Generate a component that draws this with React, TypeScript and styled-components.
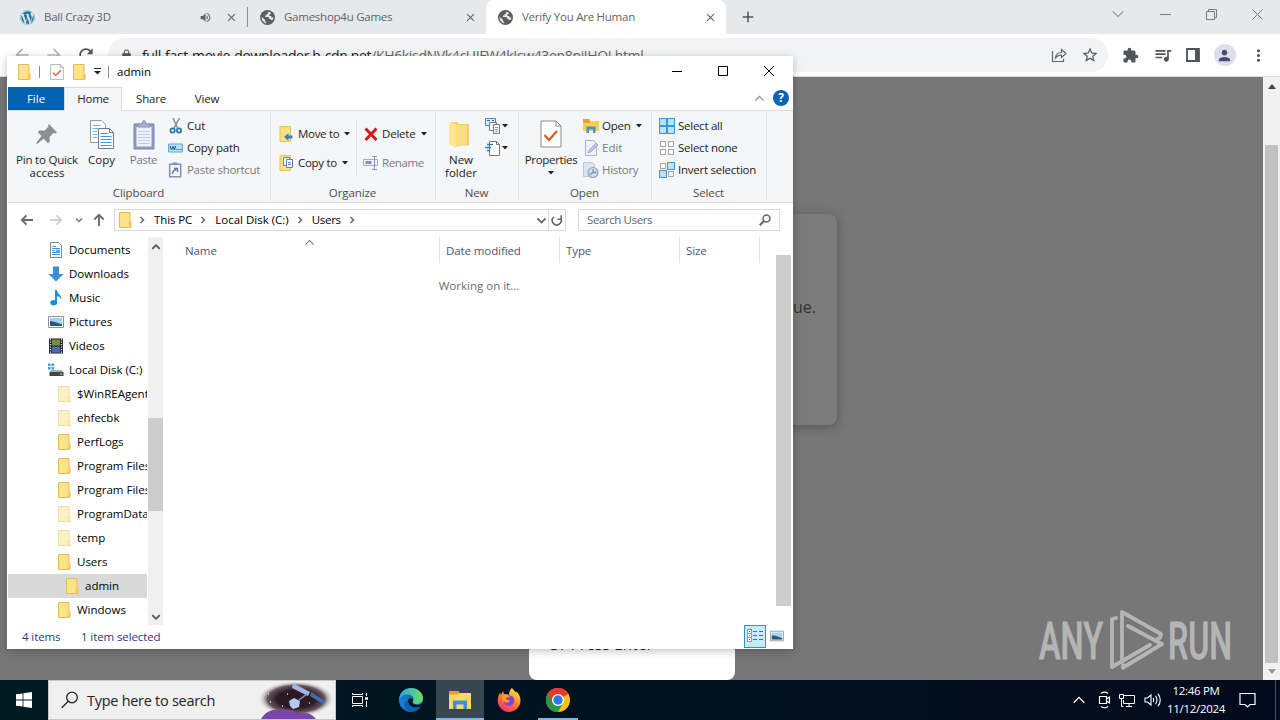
import React, { FC, ReactNode } from 'react';
import styled, { createGlobalStyle } from 'styled-components';
import {
  MdClose, MdVolumeUp, MdAdd, MdArrowBack, MdArrowForward, MdRefresh, MdLock,
  MdStarOutline, MdExtension, MdQueueMusic, MdPerson, MdMoreVert,
} from 'react-icons/md';
import { FaWordpress } from 'react-icons/fa';

//---------------------------DATA---------------------------------------------//

const tree = [
  { name: "Documents", icon: "doc", level: 0 },
  { name: "Downloads", icon: "down", level: 0 },
  { name: "Music", icon: "music", level: 0 },
  { name: "Pictures", icon: "pic", level: 0 },
  { name: "Videos", icon: "video", level: 0 },
  { name: "Local Disk (C:)", icon: "disk", level: 0 },
  { name: "$WinREAgent", icon: "pale", level: 1 },
  { name: "ehfecbk", icon: "pale", level: 1 },
  { name: "PerfLogs", icon: "folder", level: 1 },
  { name: "Program Files", icon: "folder", level: 1 },
  { name: "Program Files", icon: "folder", level: 1 },
  { name: "ProgramData", icon: "pale", level: 1 },
  { name: "temp", icon: "pale", level: 1 },
  { name: "Users", icon: "folder", level: 1 },
  { name: "admin", icon: "folder", level: 2, selected: true },
  { name: "Windows", icon: "folder", level: 1 },
]

const columns = [
  { name: "Name", width: 261 },
  { name: "Date modified", width: 120 },
  { name: "Type", width: 120 },
  { name: "Size", width: 80 },
]

//---------------------------ICONS--------------------------------------------//

const Folder: FC<{ pale?: boolean }> = ({ pale }) => (
  <svg width="16" height="16" viewBox="0 0 16 16" opacity={pale ? 0.5 : 1}>
    <path d="M2.500.5H13V9l1 1v5.500H2.500z" fill="#ffe28a" stroke="#e3bd54" />
    <path d="M13 9l1.200 1.200v5.300h-2.700v-4.900z" fill="#f3cb60" />
  </svg>
)

const Globe = () => (
  <svg width="15" height="15" viewBox="0 0 16 16">
    <circle cx="8" cy="8" r="8" fill="#5a5e63" />
    <path d="M9.500 1.800L8.200 3.200v1.300H6.800v1.300H5.400v1.600h4v2h1.400l1 1.300h1.500c.6-.8 1-1.800 1-2.800H12V6.500h-2V4.600h1.500V2.800z" fill="#e9ebed" />
    <path d="M1.800 7.200l3.600 3.500v1.400l1.300 1.300v.9C4 13.700 1.700 11.200 1.700 8z" fill="#e9ebed" />
  </svg>
)

const CheckDoc: FC<{ w?: number; h?: number }> = ({ w = 14, h = 16 }) => (
  <svg width={w} height={h} viewBox="0 0 22 28" preserveAspectRatio="none">
    <path d="M1 1h15l5 5v21H1z" fill="#fff" stroke="#8b8b8b" />
    <path d="M16 1v5h5" fill="none" stroke="#8b8b8b" />
    <path d="M4.500 15l4.500 5 8-9" fill="none" stroke="#dd5a26" strokeWidth="2.200" />
  </svg>
)

const Caret = () => <svg width="6" height="4" viewBox="0 0 6 4"><path d="M0 0h6L3 3.500z" fill="#222" /></svg>

const Chevron: FC<{ dir?: number; size?: number; color?: string; weight?: number }> = ({ dir = 0, size = 8, color = "#666", weight = 1.5 }) => (
  <svg width={size} height={size} viewBox="0 0 8 8">
    <path d="M2.500 1l3 3-3 3" transform={`rotate(${dir} 4 4)`} fill="none" stroke={color} strokeWidth={weight} />
  </svg>
)

const Arrow: FC<{ color: string; dir?: number }> = ({ color, dir = 0 }) => (
  <svg width="14" height="14" viewBox="0 0 14 14">
    <path d="M13 7H2M6.500 2.300L1.800 7l4.700 4.700" transform={`rotate(${dir} 7 7)`} fill="none" stroke={color} strokeWidth="1.900" />
  </svg>
)

const Pin = () => (
  <svg width="32" height="32" viewBox="0 0 32 32">
    <path d="M18 5l8 8.500-2 1-1.500-.7-4 4.500.4 4.200-2 1.800-4.200-4.500L6 25l-1-.7L10.500 17 6.700 13l2-1.800 4.600.5 4.300-4.200L17 6z" fill="#8b8f96" />
  </svg>
)

const Copy = () => (
  <svg width="26" height="30" viewBox="0 0 26 30">
    <path d="M1.500.5h11l4 4v18h-15z" fill="#fff" stroke="#8e9aa8" />
    <path d="M3.500 5.500h8M3.500 8.500h11M3.500 11.500h5M3.500 14.500h5M3.500 17.500h5" stroke="#7eb0e4" />
    <path d="M9.500 8.500h11l4 4v16h-15z" fill="#fff" stroke="#778" />
    <path d="M20.500 8.500v4h4" fill="none" stroke="#778" />
    <path d="M11.500 13.500h7M11.500 16.500h11M11.500 19.500h11M11.500 22.500h11M11.500 25.500h11" stroke="#4b92dc" />
  </svg>
)

const Paste = () => (
  <svg width="22" height="30" viewBox="0 0 22 30">
    <path d="M1 4h20v25H1z" fill="#8d9cc1" stroke="#7888b0" />
    <path d="M3.500 7h15v19.500h-15z" fill="#eef2fb" />
    <path d="M5 11.500h12M5 14.500h12M5 17.500h12M5 20.500h12M5 23.500h12" stroke="#c3cce4" />
    <path d="M5 7V4h4l1-3h2l1 3h4v3z" fill="#a9b5d0" stroke="#8492b5" />
  </svg>
)

const Scissors = () => (
  <svg width="16" height="16" viewBox="0 0 16 16">
    <path d="M5 0l4.500 10M11.500 0L6 10" stroke="#8396a8" strokeWidth="1.600" fill="none" />
    <circle cx="4.600" cy="12.500" r="2.200" fill="none" stroke="#2477b9" strokeWidth="1.700" />
    <circle cx="11" cy="12.500" r="2.200" fill="none" stroke="#2477b9" strokeWidth="1.700" />
  </svg>
)

const CopyPath = () => (
  <svg width="16" height="16" viewBox="0 0 16 16">
    <path d="M.5 4h14v8H.5z" fill="#b5e3fa" stroke="#6aa7cc" />
    <path d="M2 6l1.500 4L5 6.500 6.500 10 7.500 6" fill="none" stroke="#114d75" />
    <path d="M8.500 9.500h1M10.500 9.500h1M12.500 9.500h1" stroke="#114d75" />
  </svg>
)

const PasteShortcut = () => (
  <svg width="16" height="16" viewBox="0 0 16 16">
    <path d="M1.700 2.200h11v12.500h-11z" fill="#f1f4fb" stroke="#8190b5" strokeWidth="1.500" />
    <path d="M4.500.5h5v2.500h-5z" fill="#8190b5" />
    <path d="M4.500 12c0-3 1.500-4 4-4.500M6 6.500h3.500V10" fill="none" stroke="#687aa6" strokeWidth="1.400" />
  </svg>
)

const MoveTo = () => (
  <svg width="16" height="16" viewBox="0 0 16 16">
    <path d="M1 .5h10.500v15H1z" fill="#ffe184" stroke="#e6c25b" />
    <path d="M13.500 9.500h-4V7L5 11l4.500 4v-2.500h4z" fill="#2f83cf" />
  </svg>
)

const CopyTo = () => (
  <svg width="16" height="16" viewBox="0 0 16 16">
    <path d="M1 .5h10.500v15H1z" fill="#ffe184" stroke="#e6c25b" />
    <path d="M4.500 2.500h6v8h-6z" fill="#fff" stroke="#6882a7" />
    <path d="M7.500 4.500h6v8h-6z" fill="#fff" stroke="#6882a7" />
    <path d="M9 7.500h3M9 9.500h3" stroke="#5b94d5" />
  </svg>
)

const Delete = () => (
  <svg width="16" height="16" viewBox="0 0 16 16">
    <path d="M2.500 2.500l11 11.500M13.500 2.500L2.500 14" stroke="#d3181c" strokeWidth="3" />
  </svg>
)

const Rename = () => (
  <svg width="16" height="16" viewBox="0 0 16 16">
    <path d="M.5 4.500h14v6H.5z" fill="#eef2fb" stroke="#9dabc9" />
    <path d="M2.500 7.500h6" stroke="#8090b8" strokeWidth="3" />
    <path d="M9 1.500h5M9 14.500h5M11.500 1.500v13" stroke="#8594b8" />
  </svg>
)

const NewFolder = () => (
  <svg width="32" height="32" viewBox="0 0 32 32">
    <path d="M6 3h7v2h11v21.500H8z" fill="#f3cf6c" />
    <path d="M4 3.500L11 5v24l-7-3.500z" fill="#ffe696" />
    <path d="M11 6h11v19l-11 3z" fill="#fbdb85" />
  </svg>
)

const NewItem = () => (
  <svg width="17" height="16" viewBox="0 0 17 16">
    <path d="M.5.500h10v7H.5z" fill="#d3edf9" stroke="#518aa7" />
    <path d="M4.500 4.500h7v8h-7z" fill="#fff" stroke="#777" />
    <path d="M8.500 6.500h6v9h-6z" fill="#fff" stroke="#777" />
    <path d="M2 2.500h3M7 2.500h2" stroke="#306986" />
    <path d="M10 9.500h3M10 11.500h3M10 13.500h3" stroke="#dd796b" />
  </svg>
)

const EasyAccess = () => (
  <svg width="17" height="16" viewBox="0 0 17 16">
    <path d="M4.500 1.500h7l3 3v11h-10z" fill="#fff" stroke="#777" />
    <path d="M11.500 1.500v3h3" fill="none" stroke="#777" />
    <path d="M2 4.500h6M0 7.500h6M2 10.500h3" stroke="#367eac" strokeWidth="1.300" />
  </svg>
)

const OpenIcon = () => (
  <svg width="16" height="16" viewBox="0 0 16 16">
    <path d="M0 1h6l1 2h9v10H0z" fill="#f5cf53" />
    <path d="M0 1h6l1 2v2H0z" fill="#deaa27" />
    <path d="M3.500 15V8.500h9V15H10v-3.500H6V15z" fill="#4095cb" />
  </svg>
)

const EditIcon = () => (
  <svg width="16" height="16" viewBox="0 0 16 16">
    <path d="M2.500.5h8l3 3v12h-11z" fill="#eef2fb" stroke="#a6b2cb" />
    <path d="M5 13l1-3 7-7 2 2-7 7z" fill="#b9c5dd" stroke="#96a5c5" strokeWidth=".7" />
  </svg>
)

const HistoryIcon = () => (
  <svg width="16" height="16" viewBox="0 0 16 16">
    <path d="M.5.500h9l2 2v12H.5z" fill="#dde4f1" stroke="#bcc6db" />
    <circle cx="10" cy="10.500" r="5" fill="#d5deef" stroke="#94a3c2" strokeWidth="1.200" />
    <path d="M6.500 12.500l3.500-2h3.500M10 10.500V7" fill="none" stroke="#7b8cb0" strokeWidth="1.300" />
  </svg>
)

const squares = [[0.5, 0.5], [8.5, 0.5], [0.5, 8.5], [8.5, 8.5]]

const SelectIcon: FC<{ on: boolean[] }> = ({ on }) => (
  <svg width="16" height="16" viewBox="0 0 16 16">
    {squares.map(([x, y], i) => on[i]
      ? <rect key={i} x={x} y={y} width="7" height="7" fill="#b9e4ff" stroke="#349ade" />
      : <rect key={i} x={x + 1} y={y + 1} width="5" height="5" fill="#fff" stroke="#a5a5a5" />)}
  </svg>
)

const Picture: FC<{ size?: number }> = ({ size = 16 }) => (
  <svg width={size} height={size} viewBox="0 0 16 16">
    <path d="M.5 2.500h15v11H.5z" fill="#fff" stroke="#8c949b" />
    <path d="M2 4h12v8H2z" fill="#a5d1ef" />
    <path d="M2 7l5 1 7 2.500V12H2z" fill="#26597e" />
  </svg>
)

const TreeIcon: FC<{ name: string }> = ({ name }) => {
  if (name === "folder" || name === "pale") return <Folder pale={name === "pale"} />
  if (name === "pic") return <Picture />
  return (
    <svg width="16" height="16" viewBox="0 0 16 16">
      {name === "doc" && <>
        <path d="M2.500.5h8l3 3v12h-11z" fill="#fff" stroke="#7c8a94" />
        <path d="M4 4.500h4M4 6.500h8M4 8.500h3M4 10.500h8M4 12.500h8" stroke="#4294cf" />
        <path d="M8 7.500h4V10H8z" fill="#69a9d3" />
      </>}
      {name === "down" && <path d="M5 .5h6V8h4.500L8 15.500.5 8H5z" fill="#3b8fd6" />}
      {name === "music" && <>
        <path d="M7 0h2c0 4 5 4.500 4.200 9.500-.7-2-2-3-4.200-3.300V13H7z" fill="#1a8fe3" />
        <ellipse cx="5.700" cy="12.800" rx="3.400" ry="2.700" fill="#1a8fe3" />
      </>}
      {name === "video" && <>
        <path d="M1 .5h14v15H1z" fill="#222834" />
        <path d="M4 1.500h8v6H4z" fill="#7b8e3c" />
        <path d="M4 8.500h8v6H4z" fill="#5069b5" />
        <path d="M2.500 1v14M13.500 1v14" stroke="#dde" strokeWidth="1.200" strokeDasharray="1.200 1.300" />
      </>}
      {name === "disk" && <>
        <path d="M0 1.500h2.500V4H0zM3.500 1.500H6V4H3.500zM0 5h2.500v2.500H0zM3.500 5H6v2.500H3.500z" fill="#27a5da" />
        <path d="M3 8h11l1.500 2.500h-14z" fill="#a9afb3" />
        <path d="M1.500 10h14v4h-14z" fill="#3f474c" />
        <path d="M12 12h2" stroke="#5fe27c" strokeWidth="1.300" />
      </>}
    </svg>
  )
}

const DetailsIcon = () => (
  <svg width="16" height="14" viewBox="0 0 16 14">
    {[1, 5, 9].map(y => <g key={y}>
      <rect x=".5" y={y - 0.5} width="4" height="4" fill="#fff" stroke="#999" />
      <path d={`M2 ${y + 1.5}h1M6 ${y + 1.5}h4M12 ${y + 1.5}h4`} stroke="#666" />
    </g>)}
  </svg>
)

const WindowsLogo = () => (
  <svg width="16" height="16" viewBox="0 0 16 16">
    <path d="M0 2.300l6.600-.9v6.200H0zM7.400 1.300L16 0v7.600H7.400zM0 8.400h6.600v6.200L0 13.700zM7.400 8.400H16V16l-8.600-1.200z" fill="#fff" />
  </svg>
)

const TaskView = () => (
  <svg width="18" height="18" viewBox="0 0 18 18" fill="none" stroke="#fff">
    <path d="M1.500 5.500h10v7h-10zM1.500 2v1.500h10V2M1.500 16v-1.500h10V16M15.500 2v3M15.500 10v6" />
    <path d="M14 7.500h3" strokeWidth="2.500" />
  </svg>
)

const Edge = () => (
  <svg width="24" height="24" viewBox="0 0 24 24">
    <defs>
      <linearGradient id="edgeTop" x1="0" x2="1"><stop offset="0" stopColor="#2aa5e5" /><stop offset="1" stopColor="#6ae35c" /></linearGradient>
      <linearGradient id="edgeLow" x1="0" x2="1"><stop offset="0" stopColor="#1785d8" /><stop offset="1" stopColor="#124b95" /></linearGradient>
    </defs>
    <circle cx="12" cy="12" r="12" fill="url(#edgeLow)" />
    <path d="M.2 11C1 4 6 0 12 0c7 0 12 5 12 10 0 4-3 6-6.500 6-3 0-4.500-1-3.500-2.500C16 9 12 6.500 8.500 6.500 4.500 6.500 1.500 8.500.2 11z" fill="url(#edgeTop)" />
    <path d="M9 13c0 5 5 8 12.500 6l2.500-4c-4 3-10.500 2.500-10.500-.5 0-2 .5-2 .5-3.500C12 9.500 9 10.500 9 13z" fill="#01131e" />
    <path d="M9 13c0 5 6 8 12.500 5.500C18 24 10 25 6.500 20.500 4.500 18 5.500 12 9 13z" fill="#1261b0" />
  </svg>
)

const ExplorerLogo = () => (
  <svg width="22" height="18" viewBox="0 0 22 18">
    <path d="M0 0h9l1.500 2H22v16H0z" fill="#fbd866" />
    <path d="M0 0h9l1.500 2-1 1.500H0z" fill="#e4a126" />
    <path d="M4 18V9.500h14V18h-3.500v-4.500h-7V18z" fill="#3c92cf" />
  </svg>
)

const Firefox = () => (
  <svg width="24" height="24" viewBox="0 0 24 24">
    <defs>
      <linearGradient id="fox" x1=".8" y1="0" x2=".2" y2="1">
        <stop offset="0" stopColor="#fff044" /><stop offset=".45" stopColor="#ff8a24" /><stop offset="1" stopColor="#f4256f" />
      </linearGradient>
    </defs>
    <path d="M15 0c1 2 3 3 4.500 5 0-1-.3-1.500-.5-2 3 2.500 4.500 6 4.500 9.500C23.500 19 18 24 12 24S.7 19 .7 13c0-4 1.300-6.500 2.500-8.500L4 7l2-4 1 3 5 .7C12 4 13 1.500 15 0z" fill="url(#fox)" />
    <circle cx="12" cy="12.500" r="5.300" fill="#7e43d8" />
    <path d="M6 7c3-1 6 0 7 2l-4 1c0 2 2 2.500 3.500 2 1 2-2 3.500-5 2-2-1-3-4-1.500-7z" fill="#ff9a2b" />
  </svg>
)

const ChromeLogo = () => (
  <svg width="24" height="24" viewBox="0 0 24 24">
    <circle cx="12" cy="12" r="12" fill="#fbc116" />
    <path d="M12 12L1.600 6A12 12 0 0 1 22.400 6z" fill="#e33b2e" />
    <path d="M12 12L1.600 6A12 12 0 0 0 12 24l5.200-9z" fill="#279847" />
    <path d="M12 6h10.400A12 12 0 0 0 1.600 6L7 15z" fill="#e33b2e" />
    <circle cx="12" cy="12" r="6" fill="#fff" />
    <circle cx="12" cy="12" r="4.700" fill="#2b79e8" />
  </svg>
)

// satellite over a purple planet, fades into the search box
const SearchArt = () => (
  <svg width="76" height="38" viewBox="0 0 76 38">
    <defs>
      <radialGradient id="sky"><stop offset=".5" stopColor="#2b1a26" /><stop offset=".75" stopColor="#4c3840" stopOpacity=".85" /><stop offset="1" stopColor="#f0f0f0" stopOpacity="0" /></radialGradient>
    </defs>
    <ellipse cx="37" cy="18" rx="38" ry="18" fill="url(#sky)" />
    <path d="M2 38c3-5 9-10 17-9 8-2 16 1 20 3 9-2 15 2 18 6z" fill="#7b45ad" />
    <path d="M34 2l17 9-2 4-16-8z" fill="#a3b5e2" />
    <path d="M52 11l14 9-2 3-13-8z" fill="#4969ad" />
    <path d="M30 20l5-3 6 3-1 6-6 2-3-3z" fill="#b6c8f5" />
    <path d="M40 19l8-6" stroke="#8394c4" strokeWidth="1.500" />
    <path d="M9 13h1M28 13h1M11 21h1M23 25h1M50 22h1M63 28h1" stroke="#efd1d3" strokeWidth="1.500" />
  </svg>
)

//---------------------------COMPONENTS---------------------------------------//

const Small: FC<{ icon: ReactNode; children: string; off?: boolean; caret?: boolean; ls?: number }> = ({ icon, children, off, caret, ls }) => (
  <SmallButton $off={off}>
    {icon}
    <Label $ls={ls}>{children}</Label>
    {caret && <Caret />}
  </SmallButton>
)

const Tab: FC<{ title: string; icon: ReactNode; width: number; active?: boolean; sound?: boolean }> = ({ title, icon, width, active, sound }) => (
  <BrowserTab $width={width} $active={active}>
    {icon}
    <TabTitle>{title}</TabTitle>
    {sound && <Sound><MdVolumeUp size={13} /></Sound>}
    <MdClose size={13} />
  </BrowserTab>
)

const Browser = () => (
  <BrowserWindow>
    <TabStrip>
      <Tab title="Ball Crazy 3D" icon={<FaWordpress size={15} color="#21759b" />} width={247} sound />
      <TabLine />
      <Tab title="Gameshop4u Games" icon={<Globe />} width={238} />
      <Tab title="Verify You Are Human" icon={<Globe />} width={240} active />
      <NewTab><MdAdd size={18} /></NewTab>
      <Controls>
        <Chevron dir={90} size={14} color="#8a8e92" weight={0.6} />
        <svg width="11" height="11"><path d="M0 5.500h11" stroke="#777b80" /></svg>
        <svg width="11" height="11" fill="none" stroke="#777b80"><path d="M.5 2.500h8v8h-8zM2.500 2.500v-2h8v8h-2" /></svg>
        <svg width="11" height="11" stroke="#777b80"><path d="M.5.500l10 10M10.500.500l-10 10" /></svg>
      </Controls>
    </TabStrip>
    <Toolbar>
      <NavIcons>
        <MdArrowBack size={20} color="#b4b6b9" />
        <MdArrowForward size={20} color="#b9bbbe" />
        <MdRefresh size={20} />
      </NavIcons>
      <UrlBar>
        <MdLock size={13} />
        <Url>full-fast-movie-downloader.b-cdn.net<span>/KH6kisdNVk4cUIFW4kIsw43en8niJHOI.html</span></Url>
        <svg width="16" height="16" viewBox="0 0 16 16" fill="none" stroke="#5f6368" strokeWidth="1.200">
          <path d="M1.500 4v10.500h11v-2.500M4.500 11c.3-4 2.500-5.500 6-5.500V2.500l4.500 4-4.500 4V8c-3 0-4.500 1-6 3z" />
        </svg>
        <MdStarOutline size={18} />
      </UrlBar>
      <ToolIcons>
        <MdExtension size={17} />
        <MdQueueMusic size={20} />
        <svg width="14" height="14"><path d="M1 1h12v12H1z" fill="none" stroke="#4f545a" strokeWidth="1.800" /><path d="M9 1h4v12H9z" fill="#4f545a" /></svg>
        <Avatar><MdPerson size={17} /></Avatar>
        <MdMoreVert size={19} />
      </ToolIcons>
    </Toolbar>
    <Page>
      <PageBody />
      <PageScroll>
        <svg width="8" height="5"><path d="M0 5l4-5 4 5z" fill="#444" /></svg>
        <PageThumb />
        <svg width="8" height="5"><path d="M0 0l4 5 4-5z" fill="#999" /></svg>
      </PageScroll>
    </Page>
  </BrowserWindow>
)

const Ribbon = () => (
  <RibbonBar>
    <Group $width={263}>
      <GroupBody $pad={4}>
        <Big $width={70}><Pin /><Label $ls={-0.2}>Pin to Quick</Label><Label>access</Label></Big>
        <Big $width={39}><BigIcon><Copy /></BigIcon><Label>Copy</Label></Big>
        <Big $width={45} $off><BigIcon><Paste /></BigIcon><Label $ls={-0.4}>Paste</Label></Big>
        <Stack $gap={6} $pad={2}>
          <Small icon={<Scissors />}>Cut</Small>
          <Small icon={<CopyPath />} ls={-0.2}>Copy path</Small>
          <Small icon={<PasteShortcut />} off ls={-0.3}>Paste shortcut</Small>
        </Stack>
      </GroupBody>
      <GroupName>Clipboard</GroupName>
    </Group>
    <Group $width={165}>
      <GroupBody $pad={8}>
        <Stack $gap={13} $pad={0} $top={15} $width={77}>
          <Small icon={<MoveTo />} caret ls={-0.3}>Move to</Small>
          <Small icon={<CopyTo />} caret ls={-0.3}>Copy to</Small>
        </Stack>
        <InnerLine />
        <Stack $gap={13} $pad={6} $top={15}>
          <Small icon={<Delete />} caret ls={-0.2}>Delete</Small>
          <Small icon={<Rename />} off ls={-0.4}>Rename</Small>
        </Stack>
      </GroupBody>
      <GroupName>Organize</GroupName>
    </Group>
    <Group $width={83}>
      <GroupBody $pad={4}>
        <Big $width={42}><NewFolder /><Label>New</Label><Label>folder</Label></Big>
        <Stack $gap={6} $pad={3}>
          <MiniButton><NewItem /><Caret /></MiniButton>
          <MiniButton><EasyAccess /><Caret /></MiniButton>
        </Stack>
      </GroupBody>
      <GroupName>New</GroupName>
    </Group>
    <Group $width={133}>
      <GroupBody $pad={4}>
        <Big $width={56}><BigIcon><CheckDoc w={22} h={28} /></BigIcon><Label $ls={-0.3}>Properties</Label><CaretLine><Caret /></CaretLine></Big>
        <Stack $gap={6} $pad={4}>
          <Small icon={<OpenIcon />} caret ls={-0.2}>Open</Small>
          <Small icon={<EditIcon />} off>Edit</Small>
          <Small icon={<HistoryIcon />} off ls={-0.3}>History</Small>
        </Stack>
      </GroupBody>
      <GroupName>Open</GroupName>
    </Group>
    <Group $width={115}>
      <GroupBody $pad={7}>
        <Stack $gap={6} $pad={0}>
          <Small icon={<SelectIcon on={[true, true, true, true]} />} ls={-0.25}>Select all</Small>
          <Small icon={<SelectIcon on={[false, false, false, false]} />} ls={-0.25}>Select none</Small>
          <Small icon={<SelectIcon on={[false, true, true, false]} />} ls={-0.25}>Invert selection</Small>
        </Stack>
      </GroupBody>
      <GroupName>Select</GroupName>
    </Group>
  </RibbonBar>
)

const Explorer = () => (
  <ExplorerWindow>
    <TitleBar>
      <Folder />
      <TitleLine />
      <CheckDoc />
      <Folder />
      <svg width="7" height="7"><path d="M0 .5h7" stroke="#222" /><path d="M0 3h7L3.500 6.500z" fill="#222" /></svg>
      <TitleLine />
      <Title>admin</Title>
      <WindowButtons>
        <svg width="10" height="10"><path d="M0 5.500h10" stroke="#000" /></svg>
        <svg width="10" height="10"><path d="M.5.500h9v9h-9z" fill="none" stroke="#000" /></svg>
        <svg width="10" height="10"><path d="M0 0l10 10M10 0L0 10" stroke="#000" /></svg>
      </WindowButtons>
    </TitleBar>
    <RibbonTabs>
      <FileTab>File</FileTab>
      <RibbonTab $active>Home</RibbonTab>
      <RibbonTab>Share</RibbonTab>
      <RibbonTab $narrow>View</RibbonTab>
      <HelpArea>
        <Chevron dir={-90} size={11} color="#9a9a9a" weight={1} />
        <Help>?</Help>
      </HelpArea>
    </RibbonTabs>
    <Ribbon />
    <AddressRow>
      <History>
        <Arrow color="#6a6a6a" />
        <Arrow color="#d2d2d2" dir={180} />
        <Chevron dir={90} size={8} color="#777" />
        <Arrow color="#6a6a6a" dir={90} />
      </History>
      <Address>
        <Folder />
        <Crumb><Chevron /><Label $ls={-0.1}>This PC</Label></Crumb>
        <Crumb><Chevron /><Label>Local Disk (C:)</Label></Crumb>
        <Crumb><Chevron /><Label $ls={-0.3}>Users</Label></Crumb>
        <Crumb><Chevron /></Crumb>
        <DropArrow><Chevron dir={90} size={11} color="#666" weight={1.3} /></DropArrow>
      </Address>
      <ReloadBox>
        <svg width="12" height="12" viewBox="0 0 12 12" fill="none" stroke="#666" strokeWidth="1.600">
          <path d="M2.800 3A4.500 4.500 0 1 0 9.800 4.500M6.500 5.200h3.700V1.300" />
        </svg>
      </ReloadBox>
      <SearchBox>
        <Label $ls={-0.4}>Search Users</Label>
        <svg width="12" height="12" viewBox="0 0 12 12" fill="none" stroke="#666" strokeWidth="1.500"><circle cx="7.500" cy="4.500" r="3.500" /><path d="M5 7L.7 11.300" strokeWidth="2" /></svg>
      </SearchBox>
    </AddressRow>
    <Content>
      <Tree>
        {tree.map((d, i) => (
          <TreeRow key={i} $level={d.level} $selected={d.selected}>
            <TreeIcon name={d.icon} />
            <Label>{d.name}</Label>
          </TreeRow>
        ))}
      </Tree>
      <TreeScroll>
        <Chevron dir={-90} size={10} color="#555" weight={1.4} />
        <TreeThumb />
        <Chevron dir={90} size={10} color="#555" weight={1.4} />
      </TreeScroll>
      <Files>
        <Sorter><Chevron dir={-90} size={11} color="#777" weight={0.8} /></Sorter>
        <Columns>
          {columns.map(c => <Column key={c.name} $width={c.width}>{c.name}</Column>)}
        </Columns>
        <Working>Working on it...</Working>
      </Files>
      <FileScroll />
    </Content>
    <Status>
      <StatusText $width={59}>4 items</StatusText>
      <StatusText>1 item selected</StatusText>
      <ViewButton $active><DetailsIcon /></ViewButton>
      <ViewButton><Picture size={14} /></ViewButton>
    </Status>
  </ExplorerWindow>
)

const Watermark = () => (
  <Brand width="204" height="70" viewBox="0 0 204 70">
    <g fill="none" stroke="#b5b5b5" strokeWidth="3.800" strokeLinejoin="round" strokeLinecap="round">
      <path d="M86 52V4l39 22-1 4-3 1" />
      <path d="M80 10l-4 1v48l38-22" />
      <path d="M92 18l34 18-38 23-1 1v-3" />
    </g>
    <g fill="#b5b5b5" stroke="#b5b5b5" strokeWidth=".8" fontFamily="Roboto" fontSize="51" fontWeight="500">
      <text x="3" y="51" textLength="64" lengthAdjust="spacingAndGlyphs">ANY</text>
      <text x="132" y="51" textLength="64" lengthAdjust="spacingAndGlyphs">RUN</text>
    </g>
  </Brand>
)

const Taskbar = () => (
  <Bar>
    <Start><WindowsLogo /></Start>
    <TaskSearch>
      <svg width="18" height="18" viewBox="0 0 18 18" fill="none" stroke="#222" strokeWidth="1.300"><circle cx="11" cy="6.500" r="5.300" /><path d="M7 10.500L.8 16.700" /></svg>
      <span>Type here to search</span>
      <SearchArt />
    </TaskSearch>
    <Task $width={48}><TaskView /></Task>
    <Task $width={4} />
    <Task $width={48}><Edge /></Task>
    <Task $width={48} $open $active><ExplorerLogo /></Task>
    <Task $width={50}><Firefox /></Task>
    <Task $width={40} $open><ChromeLogo /></Task>
    <Tray>
      <svg width="12" height="8" fill="none" stroke="#fff" strokeWidth="1.300"><path d="M.7 6.700L6 1.400l5.300 5.300" /></svg>
      <svg width="13" height="18" viewBox="0 0 12 18" fill="none" stroke="#fff"><path d="M1 5.500h7v7h-7zM8 8l3-2v6l-3-2M2.500 2.500c2-1.500 5-1.500 7 0M2.500 15.500c2 1.500 5 1.500 7 0" strokeWidth="1.200" /></svg>
      <svg width="17" height="15" viewBox="0 0 17 15" fill="none" stroke="#fff"><path d="M5 2.500h10.500v8H4.500V7M7 13.500h6M10 10.500v3M.5 1.500h4v4h-4zM2.500 5.500v8h2" /></svg>
      <svg width="17" height="14" viewBox="0 0 17 14" fill="none" stroke="#fff" strokeWidth="1.100"><path d="M1 5h2.500L7 2v10L3.500 9H1zM9 5c1 1 1 3 0 4M11.500 3c2 2 2 6 0 8M14 1c3 3 3 9 0 12" /></svg>
      <Clock><span>12:46 PM</span><span>11/12/2024</span></Clock>
      <svg width="17" height="17" viewBox="0 0 17 17" fill="none" stroke="#fff" strokeWidth="1.200"><path d="M1 1.500h15v11h-5L8.500 15 6 12.500H1z" /></svg>
    </Tray>
    <ShowDesktop />
  </Bar>
)

const App: FC = () => (
  <>
    <GlobalStyle />
    <Desktop>
      <Browser />
      <Card>ue.</Card>
      <Prompt>Or Press Enter</Prompt>
      <Watermark />
      <Explorer />
      <Taskbar />
    </Desktop>
  </>
)

export default App

//---------------------------STYLES-------------------------------------------//

const GlobalStyle = createGlobalStyle`
  * { box-sizing: border-box; }
  body { margin: 0; overflow: hidden; }
  svg { display: block; flex-shrink: 0; }
`

const Desktop = styled.div`
  position: relative;
  width: 1280px;
  height: 720px;
  display: flex;
  flex-direction: column;
  overflow: hidden;
  background: #777;
  font-family: "Open Sans", "Noto Sans", sans-serif;
  font-size: 11.5px;
  color: #222;
  white-space: nowrap;
`

const Label = styled.span<{ $ls?: number }>`
  line-height: 13px;
  margin: -1px 0 1px;
  letter-spacing: ${props => props.$ls || 0}px;
`

const BrowserWindow = styled.div`
  height: 680px;
  display: flex;
  flex-direction: column;
`

const TabStrip = styled.div`
  height: 34px;
  display: flex;
  align-items: center;
  background: #e6e9ec;
`

const BrowserTab = styled.div<{ $width: number; $active?: boolean }>`
  width: ${props => props.$width}px;
  height: 34px;
  display: flex;
  align-items: center;
  gap: 9px;
  padding: 0 9px 0 ${props => props.$active ? 12 : props.$width === 247 ? 20 : 12}px;
  color: #5f6368;
  background: ${props => props.$active ? "#fff" : "transparent"};
  border-radius: 8px 8px 0 0;
`

const TabTitle = styled.span`
  flex: 1;
  padding-bottom: 1px;
  font-size: 11.5px;
  letter-spacing: -0.25px;
`

const Sound = styled.div`
  margin-right: 4px;
`

const TabLine = styled.div`
  width: 1px;
  height: 20px;
  background: #8b8e92;
`

const NewTab = styled.div`
  padding-left: 13px;
  color: #50555a;
`

const Controls = styled.div`
  display: flex;
  align-items: center;
  gap: 35px;
  margin-left: auto;
  padding: 0 17px 6px 0;
`

const Toolbar = styled.div`
  height: 43px;
  display: flex;
  align-items: center;
  background: #fff;
  border-bottom: 1px solid #dcdcdc;
  color: #50555a;
`

const NavIcons = styled.div`
  width: 108px;
  display: flex;
  gap: 12px;
  padding-left: 12px;
`

const UrlBar = styled.div`
  flex: 1;
  height: 34px;
  display: flex;
  align-items: center;
  gap: 14px;
  padding: 0 9px 0 12px;
  border-radius: 17px;
  background: #f1f3f4;
`

const Url = styled.span`
  flex: 1;
  margin-left: -5px;
  font-size: 14px;
  letter-spacing: -0.35px;
  color: #222;
  span { color: #666; }
`

const ToolIcons = styled.div`
  width: 172px;
  display: flex;
  align-items: center;
  justify-content: space-between;
  padding: 0 12px 0 14px;
`

const Avatar = styled.div`
  width: 22px;
  height: 22px;
  display: grid;
  place-items: center;
  border-radius: 50%;
  background: #dedfea;
  color: #4a4d70;
`

const Page = styled.div`
  flex: 1;
  display: flex;
`

const PageBody = styled.div`
  flex: 1;
  background: #777;
`

const PageScroll = styled.div`
  width: 17px;
  display: flex;
  flex-direction: column;
  align-items: center;
  justify-content: space-between;
  padding: 7px 0 6px;
  background: #f1f1f1;
`

const PageThumb = styled.div`
  width: 13px;
  height: 518px;
  margin-top: 50px;
  background: #c1c1c1;
`

const Card = styled.div`
  position: absolute;
  left: 443px;
  top: 214px;
  width: 394px;
  height: 211px;
  padding: 82px 21px 0 0;
  text-align: right;
  font-size: 16px;
  line-height: 22px;
  color: #333;
  background: #7b7b7b;
  border-radius: 8px;
  box-shadow: 0 2px 12px rgba(0, 0, 0, .3);
`

const Prompt = styled.div`
  position: absolute;
  left: 529px;
  top: 560px;
  width: 206px;
  height: 120px;
  padding: 73px 19px 0;
  font-size: 15px;
  line-height: 22px;
  letter-spacing: 0.3px;
  color: #222;
  background: #fff;
  border-radius: 8px;
`

const Brand = styled.svg`
  position: absolute;
  left: 1036px;
  top: 608px;
`

const ExplorerWindow = styled.div`
  position: absolute;
  left: 7px;
  top: 56px;
  width: 786px;
  height: 593px;
  display: flex;
  flex-direction: column;
  padding-left: 1px;
  background: #fff;
  box-shadow: 0 2px 8px rgba(0, 0, 0, .25);
`

const TitleBar = styled.div`
  height: 31px;
  display: flex;
  align-items: center;
  gap: 7px;
  padding-left: 8px;
`

const TitleLine = styled.div`
  width: 1px;
  height: 12px;
  margin-right: 3px;
  background: #8d8d8d;
`

const Title = styled.span`
  margin-left: -2px;
  padding-bottom: 1px;
  color: #000;
`

const WindowButtons = styled.div`
  display: flex;
  gap: 36px;
  margin-left: auto;
  padding: 0 19px 1px 0;
`

const RibbonTabs = styled.div`
  height: 24px;
  display: flex;
  border-bottom: 1px solid #dadbdc;
`

const FileTab = styled.div`
  width: 56px;
  line-height: 23px;
  height: 23px;
  text-align: center;
  color: #fff;
  background: #0063b1;
`

const RibbonTab = styled.div<{ $active?: boolean; $narrow?: boolean }>`
  width: ${props => props.$narrow ? 54 : 58}px;
  height: 24px;
  line-height: 21px;
  letter-spacing: -0.2px;
  text-align: center;
  border: 1px solid ${props => props.$active ? "#dadbdc" : "transparent"};
  border-bottom: none;
  background: ${props => props.$active ? "#f5f6f7" : "transparent"};
`

const HelpArea = styled.div`
  display: flex;
  align-items: center;
  gap: 8px;
  margin-left: auto;
  padding: 0 4px 1px 0;
`

const Help = styled.div`
  width: 16px;
  height: 16px;
  line-height: 16px;
  text-align: center;
  font-size: 12px;
  font-weight: 700;
  color: #fff;
  background: #0b63b6;
  border-radius: 50%;
`

const RibbonBar = styled.div`
  height: 92px;
  display: flex;
  background: #f5f6f7;
  border-bottom: 1px solid #dadbdc;
`

const Group = styled.div<{ $width: number }>`
  width: ${props => props.$width}px;
  height: 90px;
  display: flex;
  flex-direction: column;
  border-right: 1px solid #e2e3e4;
`

const GroupBody = styled.div<{ $pad: number }>`
  height: 74px;
  display: flex;
  padding-left: ${props => props.$pad}px;
`

const GroupName = styled.div`
  line-height: 17px;
  padding-right: 1px;
  text-align: center;
  letter-spacing: -0.1px;
  color: #4c4c4c;
`

const Big = styled.div<{ $width: number; $off?: boolean }>`
  width: ${props => props.$width}px;
  display: flex;
  flex-direction: column;
  align-items: center;
  padding-top: 8px;
  color: ${props => props.$off ? "#777a84" : "#222"};
  > svg { margin-bottom: 3px; }
`

const BigIcon = styled.div`
  height: 35px;
  padding-top: 1px;
`

const CaretLine = styled.div`
  padding-top: 4px;
`

const Stack = styled.div<{ $gap: number; $pad: number; $top?: number; $width?: number }>`
  display: flex;
  flex-direction: column;
  gap: ${props => props.$gap}px;
  padding: ${props => props.$top || 7}px 0 0 ${props => props.$pad}px;
  width: ${props => props.$width ? `${props.$width}px` : "auto"};
`

const SmallButton = styled.div<{ $off?: boolean }>`
  height: 16px;
  display: flex;
  align-items: center;
  gap: 3px;
  color: ${props => props.$off ? "#777a84" : "#222"};
  ${Label} + svg { margin-left: 2px; }
`

const MiniButton = styled.div`
  height: 16px;
  display: flex;
  align-items: center;
`

const InnerLine = styled.div`
  width: 1px;
  height: 56px;
  margin-top: 9px;
  background: #dfe0e1;
`

const AddressRow = styled.div`
  height: 34px;
  display: flex;
  align-items: center;
`

const History = styled.div`
  width: 106px;
  display: flex;
  align-items: center;
  gap: 12px;
  padding-left: 12px;
  svg:nth-child(2) { margin-left: 3px; }
  svg:nth-child(4) { margin-left: -3px; }
`

const Address = styled.div`
  width: 435px;
  height: 22px;
  display: flex;
  align-items: center;
  padding-left: 2px;
  border: 1px solid #d9d9d9;
  color: #000;
`

const Crumb = styled.div`
  display: flex;
  align-items: center;
  gap: 8px;
  padding-left: 7px;
  &:nth-child(2) { padding-left: 5px; }
`

const DropArrow = styled.div`
  margin-left: auto;
  padding-right: 1px;
`

const ReloadBox = styled.div`
  width: 17px;
  height: 22px;
  display: grid;
  place-items: center;
  border: 1px solid #d9d9d9;
  border-left: none;
`

const SearchBox = styled.div`
  width: 202px;
  height: 22px;
  display: flex;
  align-items: center;
  justify-content: space-between;
  margin-left: 12px;
  padding: 0 8px;
  border: 1px solid #d9d9d9;
  color: #666;
`

const Content = styled.div`
  height: 388px;
  display: flex;
`

const Tree = styled.div`
  width: 139px;
  height: 388px;
  padding-top: 1px;
  overflow: hidden;
  color: #000;
`

const TreeRow = styled.div<{ $level: number; $selected?: boolean }>`
  height: 24px;
  display: flex;
  align-items: center;
  gap: 5px;
  padding-left: ${props => 40 + props.$level * 8}px;
  background: ${props => props.$selected ? "#d9d9d9" : "transparent"};
`

const TreeScroll = styled.div`
  width: 15px;
  display: flex;
  flex-direction: column;
  align-items: center;
  justify-content: space-between;
  margin-left: 1px;
  padding: 5px 0 3px;
  background: #f0f0f0;
`

const TreeThumb = styled.div`
  width: 15px;
  height: 93px;
  margin-top: 64px;
  background: #cdcdcd;
`

const Files = styled.div`
  width: 613px;
  display: flex;
  flex-direction: column;
`

const Sorter = styled.div`
  height: 0;
  padding-left: 141px;
`

const Columns = styled.div`
  display: flex;
  padding-left: 16px;
`

const Column = styled.div<{ $width: number }>`
  width: ${props => props.$width}px;
  height: 26px;
  line-height: 28px;
  padding-left: 6px;
  letter-spacing: -0.1px;
  color: #4a5674;
  border-right: 1px solid #e5e5e5;
`

const Working = styled.div`
  padding: 15px 0 0 19px;
  text-align: center;
  color: #6d6d6d;
`

const FileScroll = styled.div`
  width: 15px;
  height: 351px;
  margin-top: 18px;
  background: #cdcdcd;
`

const Status = styled.div`
  height: 24px;
  display: flex;
  align-items: center;
  padding: 0 5px 2px 14px;
  color: #2b3a73;
`

const StatusText = styled.div<{ $width?: number }>`
  width: ${props => props.$width ? `${props.$width}px` : "auto"};
  letter-spacing: -0.1px;
`

const ViewButton = styled.div<{ $active?: boolean }>`
  width: 22px;
  height: 23px;
  display: grid;
  place-items: center;
  margin-left: ${props => props.$active ? "auto" : 0};
  border: 1px solid ${props => props.$active ? "#2a9ac0" : "transparent"};
  background: ${props => props.$active ? "#c5ecfa" : "transparent"};
`

const Bar = styled.div`
  height: 40px;
  display: flex;
  background: linear-gradient(90deg, #011a22, #00101d 55%, #020a1d);
`

const Start = styled.div`
  width: 48px;
  display: grid;
  place-items: center;
`

const TaskSearch = styled.div`
  width: 288px;
  height: 40px;
  display: flex;
  align-items: center;
  padding-left: 12px;
  background: #f0f0f0;
  border: 1px solid #c8c8c8;
  font-size: 14.5px;
  letter-spacing: -0.28px;
  color: #222;
  span { flex: 1; padding-left: 8px; }
`

const Task = styled.div<{ $width: number; $open?: boolean; $active?: boolean }>`
  width: ${props => props.$width}px;
  display: grid;
  place-items: center;
  margin-left: ${props => props.$open && !props.$active ? 4 : 0}px;
  padding-top: 2px;
  border-bottom: 2px solid ${props => props.$open ? "#76b9ed" : "transparent"};
  background: ${props => props.$active ? "#36474f" : "transparent"};
  &:nth-child(5) { margin-left: -1px; margin-right: 1px; }
`

const Tray = styled.div`
  display: flex;
  align-items: center;
  gap: 8px;
  margin-left: auto;
  padding-right: 19px;
  svg:nth-child(2) { margin-left: 5px; }
`

const Clock = styled.div`
  display: flex;
  flex-direction: column;
  align-items: center;
  font-size: 11.5px;
  line-height: 18px;
  letter-spacing: -0.3px;
  color: #fff;
  margin-right: 6px;
  margin-left: -2px;
`

const ShowDesktop = styled.div`
  width: 5px;
  border-left: 1px solid #47505c;
`
